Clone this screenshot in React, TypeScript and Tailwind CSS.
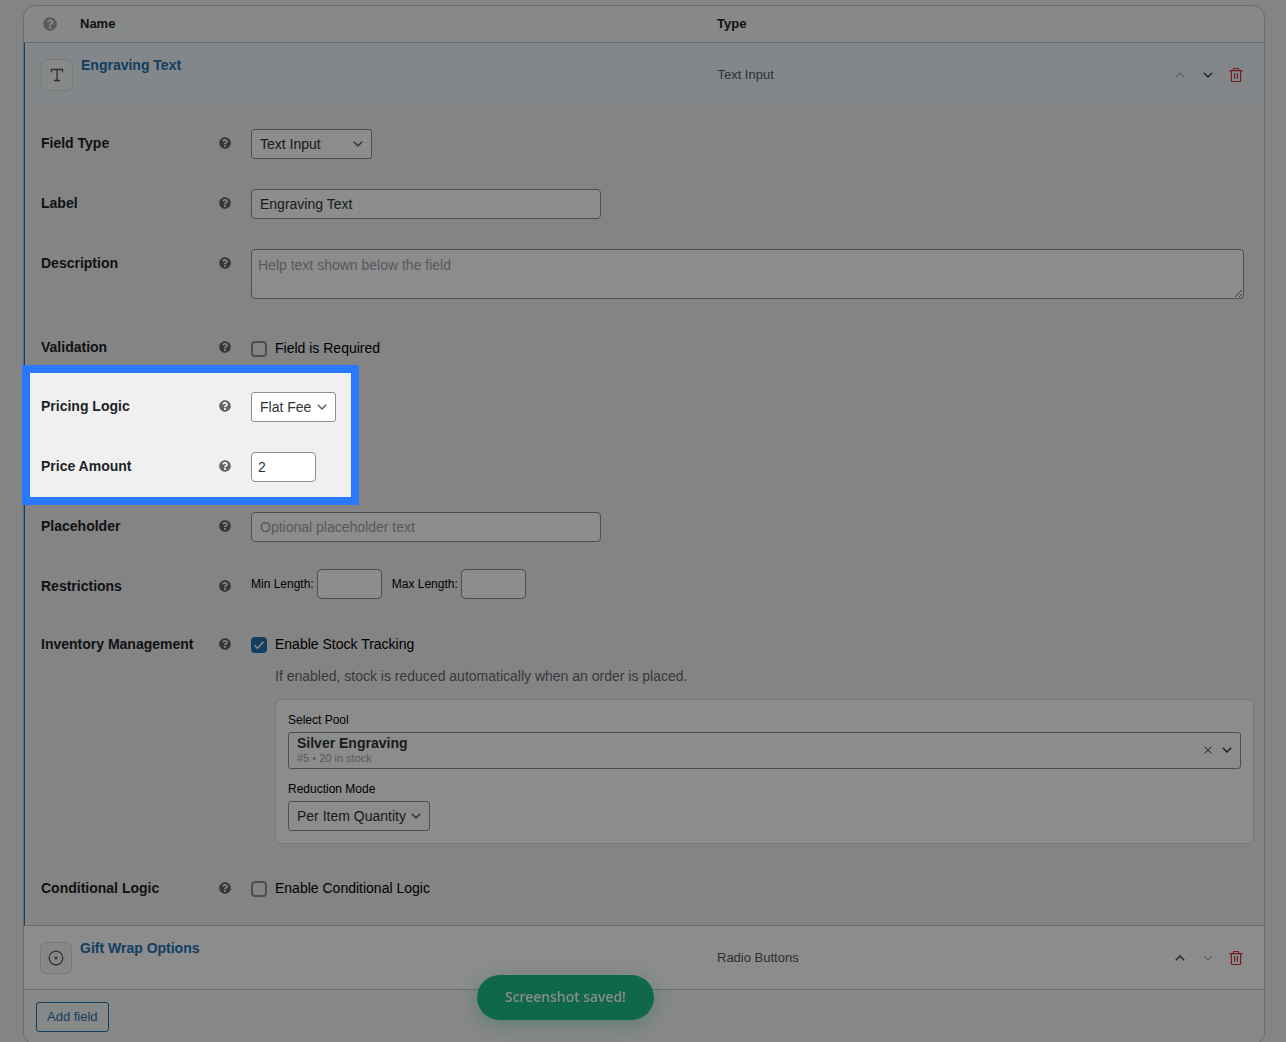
import type { ReactNode, SelectHTMLAttributes } from 'react';
import { FaQuestionCircle } from 'react-icons/fa';

const inputClass =
    'h-[30px] rounded border border-[#8c8f94] bg-white text-sm text-[#2c3338] placeholder:text-[#9ca3af]';

function Chevron({ up = false, className = '' }: { up?: boolean; className?: string }) {
    return (
        <svg
            viewBox="0 0 12 12"
            fill="none"
            stroke="currentColor"
            strokeWidth="1.4"
            className={`h-3 w-3 ${className}`}
            aria-hidden="true"
        >
            <path d={up ? 'M1.8 8.2 6 4l4.2 4.2' : 'M1.8 3.8 6 8l4.2-4.2'} />
        </svg>
    );
}

function TrashIcon() {
    return (
        <svg
            viewBox="0 0 16 16"
            fill="none"
            stroke="currentColor"
            strokeWidth="1.2"
            className="h-4 w-4"
            aria-hidden="true"
        >
            <path d="M1.4 3.7h13.2M5.3 3.7V2.3c0-.5.3-.8.8-.8h3.8c.5 0 .8.3.8.8v1.4" />
            <path d="M3.4 3.7v9.7c0 .6.5 1.1 1.1 1.1h7c.6 0 1.1-.5 1.1-1.1V3.7M6.6 6.3v5.4M9.4 6.3v5.4" />
        </svg>
    );
}

function TextIcon() {
    return (
        <svg
            viewBox="0 0 16 16"
            fill="none"
            stroke="currentColor"
            strokeWidth="1.3"
            className="h-4 w-4"
            aria-hidden="true"
        >
            <path d="M2.5 5.2V2.5h11v2.7M8 2.5v11.2M5 13.5h6" />
        </svg>
    );
}

function Help() {
    return <FaQuestionCircle className="h-3 w-3 shrink-0 text-[#646464]" />;
}

function Select({ children, ...props }: SelectHTMLAttributes<HTMLSelectElement>) {
    return (
        <span className="relative inline-block align-top">
            <select
                {...props}
                className="h-[30px] appearance-none rounded-[3px] border border-[#8c8f94] bg-white pr-[23px] pl-2 text-sm text-[#2c3338]"
            >
                {children}
            </select>
            <Chevron className="pointer-events-none absolute top-[9px] right-2 text-[#50575e]" />
        </span>
    );
}

function Checkbox({ id, label, checked = false }: { id: string; label: string; checked?: boolean }) {
    return (
        <label htmlFor={id} className="flex items-start gap-2 pt-[7px] text-sm leading-[14px] text-black">
            <span className="grid h-4 w-4">
                <input
                    id={id}
                    type="checkbox"
                    defaultChecked={checked}
                    className="peer col-start-1 row-start-1 h-4 w-4 appearance-none rounded border-2 border-[#8c8f94] checked:border-[#2271b1] checked:bg-[#2271b1]"
                />
                <svg
                    viewBox="0 0 16 16"
                    fill="none"
                    stroke="white"
                    strokeWidth="1.6"
                    className="pointer-events-none invisible col-start-1 row-start-1 h-4 w-4 peer-checked:visible"
                    aria-hidden="true"
                >
                    <path d="m3.5 8.2 3 3 6-6.4" />
                </svg>
            </span>
            {label}
        </label>
    );
}

function Field({
    label,
    htmlFor,
    cell = 'py-[15px] pr-[10px]',
    children,
}: {
    label: string;
    htmlFor: string;
    cell?: string;
    children: ReactNode;
}) {
    return (
        <div className="flex items-start">
            <div className="flex w-[200px] shrink-0 items-center justify-between py-5 pr-[10px]">
                <label htmlFor={htmlFor} className="text-sm leading-[18px] font-bold text-[#1d2327]">
                    {label}
                </label>
                <Help />
            </div>
            <div className={`min-w-0 flex-1 pl-[10px] ${cell}`}>{children}</div>
        </div>
    );
}

function FieldRow({
    icon,
    name,
    type,
    first = false,
    last = false,
    className,
}: {
    icon: ReactNode;
    name: string;
    type: string;
    first?: boolean;
    last?: boolean;
    className: string;
}) {
    return (
        <div className={`grid h-16 grid-cols-[40px_637fr_451fr_80px] items-center border-b px-4 ${className}`}>
            <span className="flex h-8 w-8 items-center justify-center rounded-md border border-[#dcdcde] bg-[#f6f7f7] text-[#50575e]">
                {icon}
            </span>
            <a href="#" className="self-start pt-[13px] text-sm leading-[18px] font-bold text-[#2271b1]">
                {name}
            </a>
            <span className="text-[13px] text-[#50575e]">{type}</span>
            <div className="flex gap-1">
                <button
                    type="button"
                    aria-label="Move up"
                    disabled={first}
                    className="flex h-6 w-6 items-center justify-center text-[#3c434a] disabled:opacity-30"
                >
                    <Chevron up />
                </button>
                <button
                    type="button"
                    aria-label="Move down"
                    disabled={last}
                    className="flex h-6 w-6 items-center justify-center text-[#3c434a] disabled:opacity-30"
                >
                    <Chevron />
                </button>
                <button
                    type="button"
                    aria-label="Delete"
                    className="flex h-6 w-6 items-center justify-center text-[#d63638]"
                >
                    <TrashIcon />
                </button>
            </div>
        </div>
    );
}

export default function App() {
    return (
        <main className="relative h-screen overflow-hidden bg-[#f0f0f1] pt-[5px] pr-[21px] pl-[23px] font-['Liberation_Sans',Arial,sans-serif]">
            <div className="rounded-xl border border-[#c3c4c7]">
                <header className="grid h-[37px] grid-cols-[40px_637fr_451fr_80px] items-center rounded-t-xl border-b border-[#c3c4c7] bg-[#f6f7f7] px-4 text-[13px] font-bold text-[#1d2327]">
                    <FaQuestionCircle className="ml-[3px] h-[14px] w-[14px] text-[#a0a3ae]" />
                    <span>Name</span>
                    <span>Type</span>
                </header>

                <section className="border-b border-l border-b-[#c3c4c7] border-l-[#2271b1]">
                    <FieldRow
                        icon={<TextIcon />}
                        name="Engraving Text"
                        type="Text Input"
                        first
                        className="border-[#e5ebf1] bg-[#f0f6fc]"
                    />

                    <div className="py-[7px] pr-[10px] pl-4">
                        <Field label="Field Type" htmlFor="field-type">
                            <Select id="field-type" defaultValue="text">
                                <option value="text">Text Input</option>
                                <option value="radio">Radio Buttons</option>
                            </Select>
                        </Field>
                        <Field label="Label" htmlFor="label">
                            <input
                                id="label"
                                type="text"
                                defaultValue="Engraving Text"
                                className={`block w-full max-w-[350px] px-2 ${inputClass}`}
                            />
                        </Field>
                        <Field label="Description" htmlFor="description" cell="pt-[15px] pr-[10px] pb-[19px]">
                            <textarea
                                id="description"
                                rows={2}
                                placeholder="Help text shown below the field"
                                className="block h-[50px] w-full rounded border border-[#8c8f94] bg-white px-1.5 py-[5px] text-sm leading-5 text-[#2c3338] placeholder:text-[#9ca3af]"
                            />
                        </Field>
                        <Field label="Validation" htmlFor="required" cell="pt-4 pb-5">
                            <Checkbox id="required" label="Field is Required" />
                        </Field>

                        <div className="relative">
                            <Field label="Pricing Logic" htmlFor="pricing">
                                <Select id="pricing">
                                    <option>Flat Fee</option>
                                </Select>
                            </Field>
                            <Field label="Price Amount" htmlFor="price">
                                <input
                                    id="price"
                                    type="text"
                                    defaultValue="2"
                                    className={`block w-[65px] px-1.5 ${inputClass}`}
                                />
                            </Field>
                            {/* spotlight: everything outside the frame is dimmed by the shadow */}
                            <div className="pointer-events-none absolute top-[-12px] bottom-[-8px] left-[-19px] z-10 w-[337px] border-8 border-[#2979ff] shadow-[0_0_0_9999px_rgba(0,0,0,0.45)]" />
                        </div>

                        <Field label="Placeholder" htmlFor="placeholder">
                            <input
                                id="placeholder"
                                type="text"
                                placeholder="Optional placeholder text"
                                className={`block w-full max-w-[350px] px-2 ${inputClass}`}
                            />
                        </Field>
                        <Field label="Restrictions" htmlFor="min-length" cell="py-3">
                            <div className="flex gap-[10px] text-xs text-black">
                                <label className="flex items-center gap-[3px]">
                                    Min Length:
                                    <input id="min-length" type="text" className={`w-[65px] px-1.5 ${inputClass}`} />
                                </label>
                                <label className="flex items-center gap-[3px]">
                                    Max Length:
                                    <input id="max-length" type="text" className={`w-[65px] px-1.5 ${inputClass}`} />
                                </label>
                            </div>
                        </Field>
                        <Field label="Inventory Management" htmlFor="stock" cell="py-[15px]">
                            <Checkbox id="stock" label="Enable Stock Tracking" checked />
                            <div className="pl-6">
                                <p className="my-[13px] text-sm text-[#646970]">
                                    If enabled, stock is reduced automatically when an order is placed.
                                </p>
                                <div className="rounded-md border border-[#dcdcde] bg-white p-3 text-xs text-black">
                                    <span id="pool-label" className="block">
                                        Select Pool
                                    </span>
                                    <div
                                        role="group"
                                        aria-labelledby="pool-label"
                                        className="mt-1 flex h-[37px] items-center rounded-[3px] border border-[#8c8f94] pr-1 pb-px pl-2"
                                    >
                                        <div className="flex-1">
                                            <div className="text-sm leading-4 font-bold text-[#2c3338]">
                                                Silver Engraving
                                            </div>
                                            <div className="text-[11px] leading-[14px] text-[#9ca3af]">
                                                #5 • 20 in stock
                                            </div>
                                        </div>
                                        <button
                                            type="button"
                                            aria-label="Clear"
                                            className="flex h-5 w-5 items-center justify-center text-[#646970]"
                                        >
                                            <svg
                                                viewBox="0 0 8 8"
                                                fill="none"
                                                stroke="currentColor"
                                                strokeWidth="1.2"
                                                className="h-2 w-2"
                                                aria-hidden="true"
                                            >
                                                <path d="m.6.6 6.8 6.8M7.4.6.6 7.4" />
                                            </svg>
                                        </button>
                                        <button
                                            type="button"
                                            aria-label="Open"
                                            className="flex h-5 w-[18px] items-center justify-center text-[#2c3338]"
                                        >
                                            <Chevron />
                                        </button>
                                    </div>
                                    <label htmlFor="reduction" className="mt-3 mb-1 block">
                                        Reduction Mode
                                    </label>
                                    <div className="flex">
                                        <Select id="reduction">
                                            <option>Per Item Quantity</option>
                                        </Select>
                                    </div>
                                </div>
                            </div>
                        </Field>
                        <Field label="Conditional Logic" htmlFor="conditional" cell="pt-[15px] pb-[21px]">
                            <Checkbox id="conditional" label="Enable Conditional Logic" />
                        </Field>
                    </div>
                </section>

                <FieldRow
                    icon={
                        <svg viewBox="0 0 16 16" className="h-4 w-4" aria-hidden="true">
                            <circle cx="8" cy="8" r="6.8" fill="none" stroke="currentColor" strokeWidth="1.2" />
                            <circle cx="8" cy="8" r="1.4" fill="currentColor" />
                        </svg>
                    }
                    name="Gift Wrap Options"
                    type="Radio Buttons"
                    last
                    className="border-[#c3c4c7] bg-white"
                />

                <footer className="rounded-b-xl bg-[#f6f7f7] p-3">
                    <button
                        type="button"
                        className="block h-[30px] rounded-[3px] border border-[#2271b1] px-[10px] text-[13px] text-[#2271b1]"
                    >
                        Add field
                    </button>
                </footer>
            </div>

            <div
                role="status"
                className="fixed bottom-[22px] left-[477px] flex h-[45px] items-center rounded-full bg-[#10b981]/95 px-7 pb-0.5 font-['Noto_Sans',sans-serif] text-sm font-medium text-white shadow-[0_4px_20px_rgba(16,185,129,0.35)]"
            >
                Screenshot saved!
            </div>
        </main>
    );
}
